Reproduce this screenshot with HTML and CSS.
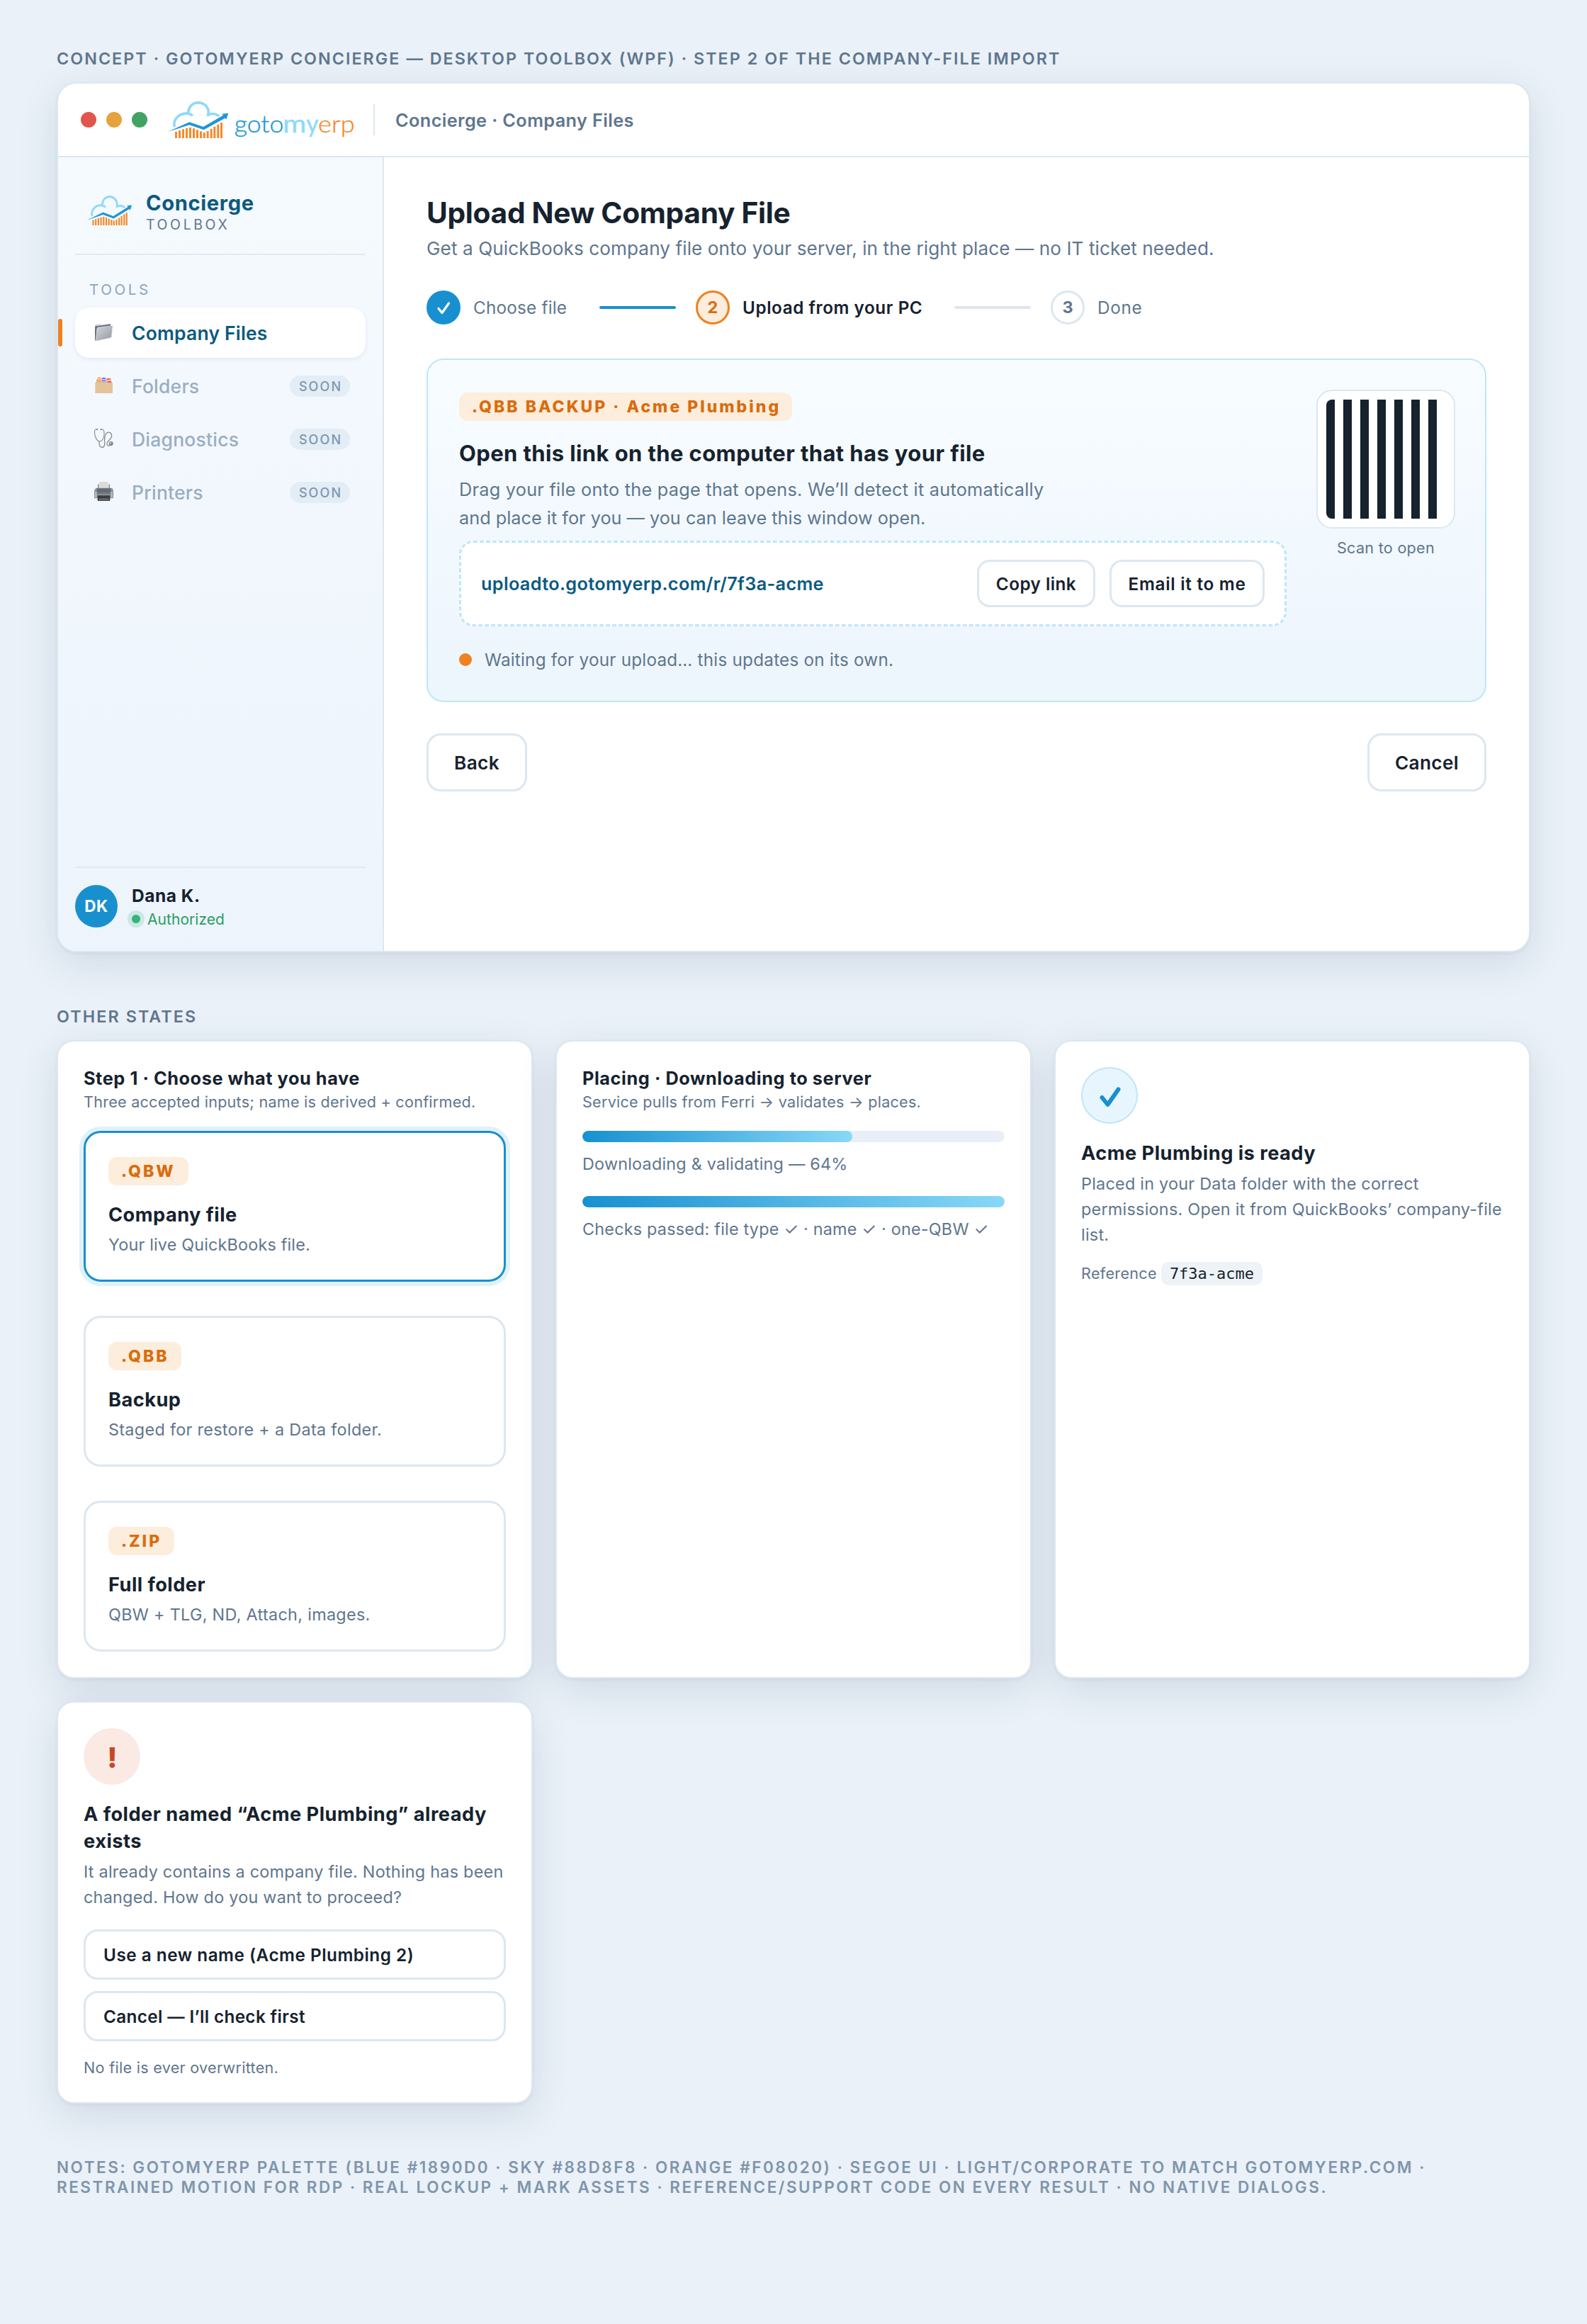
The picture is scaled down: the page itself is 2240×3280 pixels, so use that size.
FILE: index.html
```html
<!DOCTYPE html>
<html lang="en">
<head>
<meta charset="utf-8">
<title>gotomyerp Concierge – Company Files</title>
<link rel="stylesheet" href="styles.css">
</head>
<body>
<svg class="defs" aria-hidden="true">
  <defs>
    <symbol id="cloud-chart" viewBox="381 39 256 156" preserveAspectRatio="none">
      <g fill="none" stroke="#8fd9f9" stroke-width="11" stroke-linecap="round">
        <path d="M408 143C404 114 430 86 467 91C474 92 479 94 482 97"/>
        <path d="M467 88C468 62 486 44.500 510 44.500C535 44.500 553 64 553 87L551 97"/>
        <path d="M551 97C563 90 580 90 595 100"/>
      </g>
      <path d="M403 152L472 119L531 141L600 101L606 106L533 166L472 143L403 160Z" fill="#fff" opacity=".9"/>
      <g class="bars" fill="#f58a2c">
        <path d="M411 167h9v28h-9zM426 162h9v33h-9zM441 157h9v38h-9zM456 153h9v42h-9zM471 150h9v45h-9zM486 154h9v41h-9zM501 160h9v35h-9zM516 166h9v29h-9zM530 171h9v24h-9zM545 165h9v30h-9zM560 156h9v39h-9zM574 146h9v49h-9zM589 137h9v58h-9zM603 129h9v66h-9z"/>
      </g>
      <path class="arrow" d="M381 168L472 126.500L531 147L615 98L610 92L637 89L628 116L623 110L533 160L472 139Z"/>
    </symbol>
  </defs>
</svg>

<main class="page">
  <h2 class="label">CONCEPT · GOTOMYERP CONCIERGE — DESKTOP TOOLBOX (WPF) · STEP 2 OF THE COMPANY-FILE IMPORT</h2>

  <section class="window">
    <header class="titlebar">
      <div class="lights"><i class="light red"></i><i class="light amber"></i><i class="light green"></i></div>
      <svg class="lockup" viewBox="378 36 792 162" aria-label="gotomyerp">
        <use href="#cloud-chart" x="381" y="39" width="256" height="156"/>
        <g class="wordmark">
          <text class="word-goto" x="662" y="170" textLength="209" lengthAdjust="spacingAndGlyphs">goto</text>
          <text class="word-my" x="868" y="170" textLength="99" lengthAdjust="spacingAndGlyphs">m</text>
          <text class="word-my" x="967" y="170" textLength="52" lengthAdjust="spacingAndGlyphs">y</text>
          <text class="word-erp" x="1017" y="170" textLength="155" lengthAdjust="spacingAndGlyphs">erp</text>
        </g>
      </svg>
      <span class="titlebar-rule"></span>
      <span class="titlebar-text">Concierge · Company Files</span>
    </header>

    <div class="window-body">
      <aside class="sidebar">
        <div class="brand">
          <svg class="mark"><use href="#cloud-chart"/></svg>
          <div>
            <div class="brand-name">Concierge</div>
            <div class="brand-sub">TOOLBOX</div>
          </div>
        </div>
        <div class="nav-title">TOOLS</div>
        <nav class="nav">
          <a class="nav-item active">
            <svg class="nav-icon" viewBox="186 346.500 84 84">
              <defs><linearGradient id="fg" x1="0" y1="0" x2="1" y2="1"><stop offset="0" stop-color="#d3d6da"/><stop offset="1" stop-color="#9299a1"/></linearGradient></defs>
              <path d="M192 354L214 351L219 354L258 348L259 360L196 420L192 420Z" fill="#c3cace"/>
              <path d="M193 361L258 352L258 360L200 368L196 420L192 420Z" fill="#59636d"/>
              <path d="M201 368Q201 365 204 364.500L264 357Q267.500 356.500 267 360L262 405Q261.500 408 258 409L199 422Q195 423 195.500 419Z" fill="url(#fg)" stroke="#eceff2" stroke-width="1.500"/>
            </svg>
            <span>Company Files</span>
          </a>
          <a class="nav-item">
            <svg class="nav-icon" viewBox="186 573 84 84">
              <path d="M202 584L206 576H215L219 584V600H198V588Z" fill="#f8bd80"/>
              <path d="M220 579H239V600H220Z" fill="#cfc5e2"/><path d="M222 579h15v5h-15zM221 590h18v4h-18z" fill="#6a6cf0"/>
              <path d="M240 582H260L262 600H240Z" fill="#f0c8b4"/><path d="M242 582h16v5h-16zM245 594h17v6h-17z" fill="#f4565c"/>
              <path d="M199 590h18v4h-18z" fill="#f9a04e"/>
              <path d="M194 600H265Q267 600 267 603V642Q267 645 264 645H196Q193 645 193 642V603Q193 600 194 600Z" fill="#e3c39c"/>
              <path d="M196 596h48v4h-48z" fill="#d6b58e"/>
            </svg>
            <span>Folders</span><em class="soon">SOON</em>
          </a>
          <a class="nav-item">
            <svg class="nav-icon" viewBox="186 798 84 84" fill="none">
              <path d="M201 798C190 795 188 806 192 822C195 836 202 848 212 849C222 848 229 836 231 822C232 806 230 796 218 798" stroke="#9a9da1" stroke-width="4"/>
              <path d="M210 850C209 866 214 874 222 874C240 874 230 846 234 828C237 812 247 808 256 812C266 818 264 832 256 840C246 850 240 856 244 864C247 869 251 868 255 864" stroke="#8a8d92" stroke-width="4"/>
              <circle cx="260" cy="858" r="9" fill="#7c7f84"/><circle cx="258" cy="856" r="4" fill="#c9cccf"/>
              <path d="M199 798h5M215 798h5" stroke="#55585c" stroke-width="4"/>
            </svg>
            <span>Diagnostics</span><em class="soon">SOON</em>
          </a>
          <a class="nav-item">
            <svg class="nav-icon" viewBox="186 1023 84 84">
              <path d="M212 1020H246L251 1050H207Z" fill="#dcdad4"/>
              <path d="M204 1030h4v20h-4zM251 1030h4v20h-4z" fill="#7b8389"/>
              <path d="M197 1046H263Q270 1050 270 1062V1086Q270 1090 266 1090H193Q189 1090 189 1086V1062Q190 1050 197 1046Z" fill="#8b949b"/>
              <path d="M200 1048H259V1066H200Z" fill="#646c73"/>
              <path d="M190 1066H270V1072H190Z" fill="#727a81"/>
              <path d="M192 1062h8v24h-8zM259 1062h8v24h-8z" fill="#b4bcc2"/>
              <path d="M203 1078H256V1098Q256 1101 253 1101H206Q203 1101 203 1098Z" fill="#3b3d40"/>
              <path d="M208 1090h43v9h-43z" fill="#66686b"/>
            </svg>
            <span>Printers</span><em class="soon">SOON</em>
          </a>
        </nav>
        <footer class="user">
          <span class="avatar">DK</span>
          <div class="user-info">
            <div class="user-name">Dana K.</div>
            <div class="user-status"><i class="status-dot"></i>Authorized</div>
          </div>
        </footer>
      </aside>

      <div class="content">
        <h1 class="title">Upload New Company File</h1>
        <p class="subtitle">Get a QuickBooks company file onto your server, in the right place — no IT ticket needed.</p>

        <div class="stepper">
          <span class="step-dot done"><svg viewBox="0 0 48 48"><path d="M17 25.500L22 31.500L31.500 18"/></svg></span>
          <span class="step-text step-choose">Choose file</span>
          <span class="step-line filled"></span>
          <span class="step-dot current">2</span>
          <span class="step-text current-text">Upload from your PC</span>
          <span class="step-line"></span>
          <span class="step-dot">3</span>
          <span class="step-text step-last">Done</span>
        </div>

        <div class="panel">
          <div class="panel-main">
            <span class="tag tag-wide">.QBB BACKUP · Acme Plumbing</span>
            <h3 class="panel-title">Open this link on the computer that has your file</h3>
            <p class="panel-text">Drag your file onto the page that opens. We’ll detect it automatically<br><span class="tight">and place it for you — you can leave this window open.</span></p>
            <div class="linkbox">
              <span class="url">uploadto.gotomyerp.com/r/7f3a-acme</span>
              <button class="btn btn-small btn-copy">Copy link</button>
              <button class="btn btn-small btn-email">Email it to me</button>
            </div>
            <div class="waiting"><i class="pulse"></i>Waiting for your upload… this updates on its own.</div>
          </div>
          <div class="panel-side">
            <div class="qr"><div class="qr-bars"></div></div>
            <div class="qr-caption">Scan to open</div>
          </div>
        </div>

        <div class="actions">
          <button class="btn btn-back">Back</button>
          <button class="btn btn-cancel">Cancel</button>
        </div>
      </div>
    </div>
  </section>

  <h2 class="label label-next">OTHER STATES</h2>

  <section class="states">
    <article class="card">
      <h4 class="card-title">Step 1 · Choose what you have</h4>
      <p class="card-sub">Three accepted inputs; name is derived + confirmed.</p>
      <div class="options">
        <div class="option selected"><span class="tag">.QBW</span><h5 class="head">Company file</h5><p class="desc desc-live">Your live QuickBooks file.</p></div>
        <div class="option"><span class="tag">.QBB</span><h5 class="head">Backup</h5><p class="desc">Staged for restore + a Data folder.</p></div>
        <div class="option"><span class="tag">.ZIP</span><h5 class="head">Full folder</h5><p class="desc">QBW + TLG, ND, Attach, images.</p></div>
      </div>
    </article>

    <article class="card">
      <h4 class="card-title">Placing · Downloading to server</h4>
      <p class="card-sub">Service pulls from Ferri → validates → places.</p>
      <div class="progress"><div class="progress-fill" style="width:64%"></div></div>
      <p class="progress-text">Downloading &amp; validating — 64%</p>
      <div class="progress progress-next"><div class="progress-fill" style="width:100%"></div></div>
      <p class="progress-text">Checks passed: file type ✓ · name ✓ · one-QBW ✓</p>
    </article>

    <article class="card">
      <span class="badge ok"><svg viewBox="0 0 80 80"><path d="M29.500 43L37.500 53L52.500 31.500"/></svg></span>
      <h5 class="head head-result">Acme Plumbing is ready</h5>
      <p class="result-text">Placed in your Data folder with the correct<br>permissions. Open it from QuickBooks’ company-file<br>list.</p>
      <p class="reference">Reference <code class="code">7f3a-acme</code></p>
    </article>

    <article class="card">
      <span class="badge warn">!</span>
      <h5 class="head head-result">A folder named “Acme Plumbing” already<br>exists</h5>
      <p class="result-text">It already contains a company file. Nothing has been<br>changed. How do you want to proceed?</p>
      <div class="choices">
        <button class="btn choice">Use a new name (Acme Plumbing 2)</button>
        <button class="btn choice choice-cancel">Cancel — I’ll check first</button>
      </div>
      <p class="note">No file is ever overwritten.</p>
    </article>
  </section>

  <p class="notes">NOTES: GOTOMYERP PALETTE (BLUE #1890D0 · SKY #88D8F8 · ORANGE #F08020) · SEGOE UI · LIGHT/CORPORATE TO MATCH GOTOMYERP.COM ·<br>RESTRAINED MOTION FOR RDP · REAL LOCKUP + MARK ASSETS · REFERENCE/SUPPORT CODE ON EVERY RESULT · NO NATIVE DIALOGS.</p>
</main>
</body>
</html>
```
FILE: styles.css
```css
:root {
  --ink: #16222e;
  --muted: #5f768e;
  --blue: #1890d0;
  --sky: #88d8f8;
  --sky-line: #bfe6f8;
  --deep: #0c5a80;
  --orange: #f08020;
  --line: #dce7f0;
}

* { box-sizing: border-box; }

body {
  margin: 0;
  min-height: 3280px;
  background: #eaf1f8;
  color: var(--ink);
  font-family: Inter, "Liberation Sans", sans-serif;
}

h1, h2, h3, h4, h5, p { margin: 0; }
button { font-family: inherit; }
.defs { display: none; }

.page { width: 2240px; padding: 69px 80px 0; white-space: nowrap; }

.label { font-size: 23.3px; line-height: 28px; font-weight: 600; letter-spacing: 2.04px; color: var(--muted); }
.label-next { margin: 77px 0 19px; letter-spacing: 2.09px; }

/* Window */
.window {
  margin-top: 19px;
  height: 1228px;
  display: flex;
  flex-direction: column;
  background: #fff;
  border: 2px solid var(--line);
  border-radius: 28px;
  overflow: hidden;
  box-shadow: 0 2px 4px rgba(16, 50, 80, .05), 0 16px 56px rgba(16, 50, 80, .12);
}
.titlebar {
  height: 104px;
  flex: none;
  display: flex;
  align-items: center;
  padding-left: 32px;
  border-bottom: 2px solid var(--line);
}
.lights { display: flex; gap: 14px; }
.light { width: 22px; height: 22px; border-radius: 50%; }
.red { background: #e0564b; }
.amber { background: #e6a23c; }
.green { background: #41a363; }
.lockup { width: 264px; height: 54px; margin-left: 28px; }
.arrow { fill: #2095d8; }
.wordmark { font-family: Lato, sans-serif; font-size: 102px; font-weight: 300; stroke-width: 1.2px; }
.word-goto { fill: #1f97d6; stroke: #1f97d6; }
.word-my { fill: #8fd9f9; stroke: #8fd9f9; font-weight: 400; }
.word-erp { fill: #f58a2c; stroke: #f58a2c; }
.titlebar-rule { width: 2px; height: 44px; margin: 0 29px 0 27px; background: var(--line); }
.titlebar-text { font-size: 25.3px; font-weight: 600; letter-spacing: .37px; color: var(--muted); }

.window-body { flex: 1; display: flex; }

/* Sidebar */
.sidebar {
  width: 460px;
  flex: none;
  display: flex;
  flex-direction: column;
  padding: 0 24px 33px;
  border-right: 2px solid var(--line);
  background: linear-gradient(180deg, #f5fafe, #edf4fc);
}
.brand { display: flex; padding: 46px 0 29px 17px; border-bottom: 2px solid #dfeaf4; }
.mark { width: 63px; height: 42px; margin: 8px 20px 0 0; }
.mark .arrow { fill: #0a8fdc; }
.brand-name { font-size: 29.2px; line-height: 37px; font-weight: 700; letter-spacing: .62px; color: var(--deep); }
.brand-sub { font-size: 19.5px; line-height: 24px; letter-spacing: 3.6px; color: var(--muted); }
.nav-title { margin: 35px 0 11px 20px; font-size: 20.5px; line-height: 28px; letter-spacing: 3.6px; color: #8fa5bb; }
.nav { display: flex; flex-direction: column; gap: 4px; }
.nav-item {
  position: relative;
  height: 71px;
  display: flex;
  align-items: center;
  padding: 0 22px 0 26px;
  border-radius: 20px;
  font-size: 26.5px;
  font-weight: 500;
  letter-spacing: .22px;
  color: #9aaec3;
}
.nav-item.active { background: #fff; color: var(--deep); font-weight: 600; letter-spacing: .18px; box-shadow: 0 2px 6px rgba(16, 50, 80, .08); }
.nav-item.active::before {
  content: "";
  position: absolute;
  left: -24px;
  top: 16px;
  width: 6px;
  height: 39px;
  border-radius: 3px;
  background: var(--orange);
}
.nav-icon { width: 28px; height: 28px; margin-right: 26px; overflow: visible; }
.soon {
  margin-left: auto;
  width: 85px;
  height: 30px;
  border-radius: 15px;
  background: #e2edf6;
  padding-left: 2px;
  text-align: center;
  font-size: 18px;
  line-height: 31px;
  font-style: normal;
  letter-spacing: 2.1px;
  color: #7f96ad;
}
.user { margin-top: auto; display: flex; align-items: center; height: 86px; padding-top: 24px; border-top: 2px solid #dfeaf4; }
.avatar {
  width: 60px;
  height: 60px;
  border-radius: 50%;
  background: var(--blue);
  color: #fff;
  text-align: center;
  font-size: 22.5px;
  line-height: 60px;
  font-weight: 700;
  letter-spacing: .6px;
}
.user-info { margin-left: 20px; padding-top: 3px; }
.user-name { font-size: 24.5px; line-height: 33px; font-weight: 700; letter-spacing: .53px; }
.user-status { display: flex; align-items: center; font-size: 21px; line-height: 33px; letter-spacing: .05px; color: #2a9d63; }
.status-dot { width: 12px; height: 12px; margin-right: 10px; border-radius: 50%; background: #34b37a; box-shadow: 0 0 0 6px rgba(52, 179, 122, .18); }

/* Content */
.content { flex: 1; padding: 54px 60px 0; }
.title { font-size: 40.7px; line-height: 49px; font-weight: 700; letter-spacing: -.3px; }
.subtitle { margin-top: 10px; font-size: 26.2px; line-height: 32px; letter-spacing: .066px; color: var(--muted); }

.stepper { display: flex; align-items: center; margin-top: 43px; }
.step-dot {
  width: 48px;
  height: 48px;
  border: 3px solid var(--line);
  border-radius: 50%;
  text-align: center;
  font-size: 23.5px;
  line-height: 42px;
  font-weight: 700;
  color: var(--muted);
}
.step-dot.done { border: 0; background: var(--blue); }
.step-dot.done path { fill: none; stroke: #fff; stroke-width: 3.2; stroke-linecap: round; stroke-linejoin: round; }
.step-dot svg { display: block; }
.step-dot.current { border-color: var(--orange); background: #fdeddc; color: #d96c0c; }
.step-text { margin-left: 18px; font-size: 24.3px; letter-spacing: .2px; color: var(--muted); }
.step-choose { width: 178px; }
.current-text { width: 281px; font-weight: 600; letter-spacing: .55px; color: var(--ink); }
.step-last { letter-spacing: .7px; }
.step-line { width: 108px; height: 4px; margin-right: 28px; border-radius: 2px; background: var(--line); }
.step-line.filled { background: var(--blue); }
.current-text + .step-line { margin-left: 18px; }

.panel {
  display: flex;
  justify-content: space-between;
  height: 485px;
  margin-top: 48px;
  padding: 46px 44px 0;
  border: 2px solid var(--sky-line);
  border-radius: 24px;
  background: linear-gradient(180deg, #f7fcff, #edf5fd);
}
.panel-main { width: 1168px; }
.tag {
  display: block;
  width: fit-content;
  padding: 0 18px;
  border-radius: 12px;
  background: #fdeddc;
  color: #d96c0c;
  font-size: 23px;
  line-height: 40px;
  font-weight: 800;
  letter-spacing: 2.95px;
}
.tag-wide { padding-right: 16px; letter-spacing: 2.99px; }
.panel-title { margin-top: 26px; font-size: 31px; line-height: 40px; font-weight: 700; letter-spacing: .39px; }
.panel-text { margin-top: 11px; font-size: 25.3px; line-height: 40px; letter-spacing: .234px; color: var(--muted); }
.tight { letter-spacing: -.01px; }
.linkbox {
  display: flex;
  align-items: center;
  height: 121px;
  margin-top: 12px;
  padding: 0 28px;
  border: 3px dashed var(--sky-line);
  border-radius: 20px;
  background: #fff;
}
.url { margin-right: auto; font-size: 25.3px; font-weight: 600; letter-spacing: .33px; color: var(--deep); }
.btn {
  padding: 0;
  border: 3px solid var(--line);
  border-radius: 20px;
  background: #fff;
  color: var(--ink);
  font-size: 26.2px;
  font-weight: 600;
  letter-spacing: .38px;
}
.btn-small { height: 67px; border-radius: 18px; font-size: 24.3px; }
.btn-copy { width: 167px; letter-spacing: .45px; }
.btn-email { width: 219px; margin-left: 20px; letter-spacing: .72px; }
.waiting { display: flex; align-items: center; margin-top: 31px; font-size: 24.3px; line-height: 32px; letter-spacing: .21px; color: var(--muted); }
.pulse { width: 18px; height: 18px; margin-right: 18px; border-radius: 50%; background: var(--orange); }

.panel-side { width: 192px; display: flex; flex-direction: column; align-items: center; }
.qr { flex: none; width: 196px; height: 196px; margin: -4px -2px 0; padding: 12px; border: 2px solid var(--line); border-radius: 22px; background: #fff; }
.qr-bars { width: 168px; height: 168px; border-radius: 8px; background: repeating-linear-gradient(90deg, var(--ink) 0 12px, #fff 12px 24px); }
.qr-caption { margin-top: 13px; font-size: 21.6px; line-height: 28px; letter-spacing: .27px; color: var(--muted); }

.actions { display: flex; justify-content: space-between; margin-top: 44px; }
.actions .btn { height: 82px; padding-top: 1px; }
.btn-back { width: 142px; }
.btn-cancel { width: 168px; }

/* State cards */
.states { display: grid; grid-template-columns: repeat(3, 672px); grid-template-rows: 901px 568px; gap: 32px; }
.card {
  padding: 36px;
  border: 2px solid var(--line);
  border-radius: 24px;
  background: #fff;
  box-shadow: 0 2px 4px rgba(16, 50, 80, .05), 0 16px 56px rgba(16, 50, 80, .12);
}
.card-title { font-size: 25.3px; line-height: 32px; font-weight: 700; letter-spacing: .56px; }
.card-sub { margin-top: 3px; font-size: 21.6px; line-height: 28px; letter-spacing: .24px; color: var(--muted); }
.options { display: flex; flex-direction: column; gap: 48px; margin-top: 27px; }
.option { height: 213px; padding: 34px 32px 0; border: 3px solid var(--line); border-radius: 24px; }
.option.selected { border-color: var(--blue); box-shadow: 0 0 0 6px #e0f1fa; }
.head { font-size: 27.2px; line-height: 36px; font-weight: 700; letter-spacing: .475px; }
.option .head { margin-top: 24px; }
.desc { margin-top: 8px; font-size: 23.4px; line-height: 32px; letter-spacing: .3px; color: var(--muted); }
.desc-live { letter-spacing: .165px; }
.progress { height: 16px; margin-top: 27px; border-radius: 8px; background: #e8eff6; overflow: hidden; }
.progress-next { margin-top: 29px; }
.progress-fill { height: 16px; border-radius: 8px; background: linear-gradient(90deg, var(--blue), var(--sky)); }
.progress-text { margin-top: 15px; font-size: 23.4px; line-height: 32px; letter-spacing: .2px; color: var(--muted); }

.badge { display: block; width: 80px; height: 80px; border-radius: 50%; }
.badge.ok { border: 2px solid var(--sky-line); background: #e7f6fe; }
.badge.ok svg { display: block; width: 80px; height: 80px; margin: -2px; }
.badge.ok path { fill: none; stroke: var(--blue); stroke-width: 6; stroke-linecap: round; stroke-linejoin: round; }
.badge.warn { background: #fbe9e3; color: #c24a26; padding-left: 1px; text-align: center; font-size: 40px; line-height: 83px; font-weight: 800; }
.head-result { margin-top: 23px; line-height: 38px; letter-spacing: .49px; }
.result-text { margin-top: 6px; font-size: 23.4px; line-height: 36px; letter-spacing: .24px; color: var(--muted); }
.reference { display: flex; align-items: center; margin-top: 20px; font-size: 21.6px; line-height: 33px; letter-spacing: .3px; color: var(--muted); }
.code { margin-left: 6px; padding: 0 12px; border-radius: 10px; background: #eef3f8; color: var(--ink); font-family: "DejaVu Sans Mono", monospace; font-size: 22px; letter-spacing: 0; }
.choices { display: flex; flex-direction: column; gap: 16px; margin-top: 27px; }
.choice { height: 71px; padding: 0 0 0 25px; text-align: left; font-size: 24.3px; letter-spacing: .51px; }
.choice-cancel { letter-spacing: .36px; }
.note { margin-top: 23px; font-size: 21.6px; line-height: 28px; letter-spacing: .28px; color: var(--muted); }

.notes { margin-top: 76px; font-size: 22.5px; line-height: 28px; font-weight: 600; letter-spacing: 2.53px; color: #8095ab; }
```
